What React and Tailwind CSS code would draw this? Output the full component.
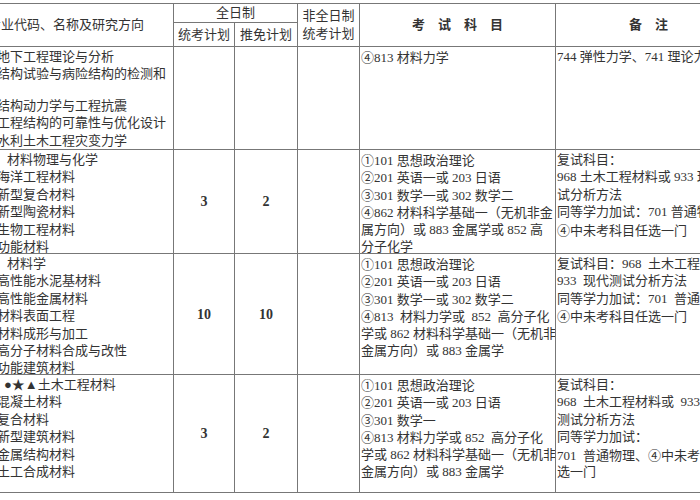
import React from "react";

const font = { fontFamily: '"Liberation Serif", "Noto Sans CJK SC", serif' };
const cjk = { fontFamily: '"Noto Sans CJK SC", sans-serif' };

const rows = [
  {
    majors: [
      { t: "地下工程理论与分析" },
      { t: "结构试验与病险结构的检测和" },
      { t: "" },
      { t: "结构动力学与工程抗震" },
      { t: "工程结构的可靠性与优化设计" },
      { t: "水利土木工程灾变力学" },
    ],
    a: "",
    b: "",
    exams: ["④813 材料力学"],
    notes: ["744 弹性力学、741 理论力学"],
  },
  {
    majors: [
      { t: "材料物理与化学", head: "pl-[10px]" },
      { t: "海洋工程材料" },
      { t: "新型复合材料" },
      { t: "新型陶瓷材料" },
      { t: "生物工程材料" },
      { t: "功能材料" },
    ],
    a: "3",
    b: "2",
    exams: [
      "①101 思想政治理论",
      "②201 英语一或 203 日语",
      "③301 数学一或 302 数学二",
      "④862 材料科学基础一（无机非金",
      "属方向）或 883 金属学或 852 高",
      "分子化学",
    ],
    notes: [
      "复试科目：",
      "968 土木工程材料或 933 现代测",
      "试分析方法",
      "同等学力加试：701 普通物理、",
      "④中未考科目任选一门",
    ],
  },
  {
    majors: [
      { t: "材料学", head: "pl-[10px]" },
      { t: "高性能水泥基材料" },
      { t: "高性能金属材料" },
      { t: "材料表面工程" },
      { t: "材料成形与加工" },
      { t: "高分子材料合成与改性" },
      { t: "功能建筑材料" },
    ],
    a: "10",
    b: "10",
    exams: [
      "①101 思想政治理论",
      "②201 英语一或 203 日语",
      "③301 数学一或 302 数学二",
      "④813  材料力学或  852  高分子化",
      "学或 862 材料科学基础一（无机非",
      "金属方向）或 883 金属学",
    ],
    notes: [
      "复试科目：968  土木工程材料或",
      "933  现代测试分析方法",
      "同等学力加试：701  普通物理、",
      "④中未考科目任选一门",
    ],
  },
  {
    majors: [
      { t: "●★▲土木工程材料", head: "pl-[7px]" },
      { t: "混凝土材料" },
      { t: "复合材料" },
      { t: "新型建筑材料" },
      { t: "金属结构材料" },
      { t: "土工合成材料" },
    ],
    a: "3",
    b: "2",
    exams: [
      "①101 思想政治理论",
      "②201 英语一或 203 日语",
      "③301 数学一",
      "④813 材料力学或 852  高分子化",
      "学或 862 材料科学基础一（无机非",
      "金属方向）或 883 金属学",
    ],
    notes: [
      "复试科目：",
      "968  土木工程材料或  933  现代",
      "测试分析方法",
      "同等学力加试：",
      "701  普通物理、④中未考科目任",
      "选一门",
    ],
  },
];

// circled numbers need the CJK face, the serif one draws them too small
function Line({ text }) {
  const parts = text.split(/([①②③④⑤⑥⑦⑧⑨⑩])/);
  return (
    <div className="h-[17.4px]">
      {parts.map((p, i) =>
        /[①②③④⑤⑥⑦⑧⑨⑩]/.test(p) ? (
          <span key={i} style={cjk}>
            {p}
          </span>
        ) : (
          p
        )
      )}
    </div>
  );
}

function Lines({ items }) {
  return (
    <div className="flex flex-col pt-[1px] leading-[17.4px] text-[13px] whitespace-pre">
      {items.map((l, i) => (
        <Line key={i} text={l} />
      ))}
    </div>
  );
}

function App() {
  return (
    <div className="w-[700px] h-[500px] overflow-hidden bg-white text-[#333]" style={font}>
      <div className="ml-[-42px] mt-[3px] w-[742px] grid grid-cols-[214px_60px_62px_61px_195px_185px] grid-rows-[18px_23px_102px_103px_120px_117px] gap-px bg-[#777] py-px pl-px">
        <div className="bg-white row-span-2 flex items-center justify-center text-[13px]">
          专业代码、名称及研究方向
        </div>
        <div className="bg-white col-span-2 flex items-center justify-center text-[13px]">
          全日制
        </div>
        <div className="bg-white row-span-2 flex flex-col items-center justify-center text-[13px] leading-[18px]">
          <div>非全日制</div>
          <div>统考计划</div>
        </div>
        <div className="bg-white row-span-2 flex items-center justify-center gap-[13px] text-[13px] font-bold">
          <span>考</span>
          <span>试</span>
          <span>科</span>
          <span>目</span>
        </div>
        <div className="bg-white row-span-2 flex items-center justify-center gap-[13px] text-[13px] font-bold">
          <span>备</span>
          <span>注</span>
        </div>
        <div className="bg-white flex items-center justify-center text-[13px]">统考计划</div>
        <div className="bg-white flex items-center justify-center text-[13px]">推免计划</div>

        {rows.map((r, i) => (
          <React.Fragment key={i}>
            <div className="bg-white pl-[38px] flex flex-col pt-[1px] leading-[17.4px] text-[13px] whitespace-nowrap">
              {r.majors.map((m, j) => (
                <div key={j} className={"h-[17.4px] " + (m.head || "")}>
                  {m.t}
                </div>
              ))}
            </div>
            <div className="bg-white flex items-center justify-center text-[14px] font-bold">{r.a}</div>
            <div className="bg-white flex items-center justify-center text-[14px] font-bold">{r.b}</div>
            <div className="bg-white"></div>
            <div className="bg-white pl-[1px] overflow-hidden">
              <Lines items={r.exams} />
            </div>
            <div className="bg-white pl-[1px] overflow-hidden">
              <Lines items={r.notes} />
            </div>
          </React.Fragment>
        ))}
      </div>
    </div>
  );
}

export default App;
